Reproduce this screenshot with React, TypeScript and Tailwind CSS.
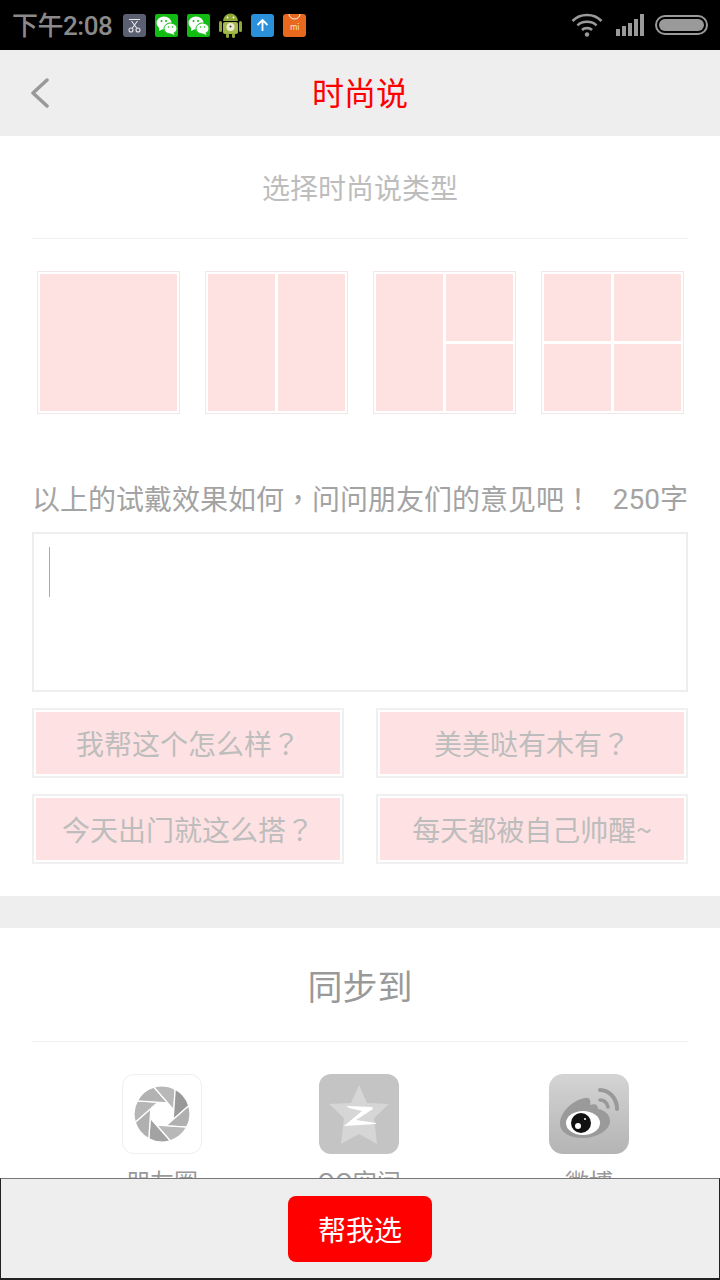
import React from "react";

function Wechat() {
  return (
    <div className="flex h-[23px] w-[23px] items-center justify-center rounded-[2px] bg-[#12bb12]">
      <svg width="23" height="23" viewBox="0 0 23 23">
        <ellipse cx="9" cy="9" rx="7.500" ry="6.500" fill="#fff" />
        <path d="M4.500 13 L4 17 L9 14.500 Z" fill="#fff" />
        <ellipse cx="15.500" cy="14.500" rx="6.500" ry="5.500" fill="#fff" stroke="#12bb12" strokeWidth="1" />
        <path d="M18.500 18.500 L19.500 21 L15.500 19.500 Z" fill="#fff" />
        <circle cx="6.500" cy="7" r="1" fill="#12bb12" />
        <circle cx="11" cy="7" r="1" fill="#12bb12" />
        <circle cx="13.500" cy="13" r="0.800" fill="#12bb12" />
        <circle cx="17.500" cy="13" r="0.800" fill="#12bb12" />
      </svg>
    </div>
  );
}

function StatusBar() {
  return (
    <div className="flex h-[50px] items-center bg-black pl-[12px] pr-[12px]">
      <span className="text-[26px] font-medium leading-none tracking-[-0.5px] text-[#8a8a8a]">
        下午<span className="font-['Roboto',sans-serif]">2:08</span>
      </span>
      <div className="ml-[11px] flex items-center gap-[9px]">
        <div className="flex h-[23px] w-[23px] items-center justify-center rounded-[3px] bg-[#5a5f72]">
          <svg width="15" height="15" viewBox="0 0 15 15" fill="none" stroke="#e8e8e8" strokeWidth="1.100">
            <circle cx="4" cy="12" r="2" />
            <circle cx="11" cy="12" r="2" />
            <path d="M5 10.500 L10.500 3 M10 10.500 L4.500 3 M2 1.500 H13" />
          </svg>
        </div>
        <Wechat />
        <Wechat />
        <svg width="23" height="26" viewBox="0 0 23 26">
          <rect x="0" y="9" width="3" height="11" rx="1.500" fill="#8fa83a" />
          <rect x="20" y="9" width="3" height="11" rx="1.500" fill="#8fa83a" />
          <path d="M4 9 A7.500 7.500 0 0 1 19 9 Z" fill="#8fa83a" />
          <rect x="4" y="10" width="15" height="12" rx="2" fill="#a3b94a" />
          <rect x="7" y="21" width="3" height="5" rx="1.500" fill="#8fa83a" />
          <rect x="13" y="21" width="3" height="5" rx="1.500" fill="#8fa83a" />
          <circle cx="11.500" cy="15" r="4" fill="#f0ead8" />
          <circle cx="8.500" cy="5.500" r="0.900" fill="#fff" />
          <circle cx="14.500" cy="5.500" r="0.900" fill="#fff" />
          <circle cx="11.500" cy="14.500" r="1" fill="#443" />
        </svg>
        <div className="flex h-[23px] w-[23px] items-center justify-center rounded-[3px] bg-[#2a90dc]">
          <svg width="13" height="14" viewBox="0 0 13 14" fill="none" stroke="#fff" strokeWidth="1.800">
            <path d="M6.500 13 V2 M1.500 7 L6.500 2 L11.500 7" />
          </svg>
        </div>
        <div className="relative flex h-[23px] w-[23px] items-center justify-center overflow-hidden rounded-[3px] bg-[#e8681e]">
          <svg className="absolute left-0 top-0" width="23" height="23" viewBox="0 0 23 23" fill="none" stroke="#fff">
            <path d="M6 0 A5.500 5 0 0 0 17 0" strokeWidth="1" />
          </svg>
          <span className="mt-[3px] text-[8px] leading-none text-[#f8e0d0]">mi</span>
        </div>
      </div>
      <div className="ml-auto flex items-center">
        <svg width="32" height="26" viewBox="0 0 32 26" fill="none" stroke="#9a9a9a" strokeWidth="2.600">
          <path d="M1.500 9 C 9 1, 23 1, 30.500 9" />
          <path d="M6.500 13.500 C 11 8.500, 21 8.500, 25.500 13.500" />
          <path d="M11 18 C 13.500 15.500, 18.500 15.500, 21 18" />
          <circle cx="16" cy="22.500" r="2.200" fill="#9a9a9a" stroke="none" />
        </svg>
        <div className="ml-[13px] flex h-[22px] items-end gap-[2px]">
          <div className="h-[7px] w-[4px] bg-[#9a9a9a]" />
          <div className="h-[10px] w-[4px] bg-[#9a9a9a]" />
          <div className="h-[13px] w-[4px] bg-[#9a9a9a]" />
          <div className="h-[17px] w-[4px] bg-[#9a9a9a]" />
          <div className="h-[22px] w-[4px] bg-[#9a9a9a]" />
        </div>
        <div className="ml-[11px] flex h-[20px] w-[53px] items-center rounded-[10px] border-[2px] border-[#9a9a9a] p-[2px]">
          <div className="h-full w-full rounded-[6px] bg-[#9a9a9a]" />
        </div>
      </div>
    </div>
  );
}

function Tile({ variant }: { variant: number }) {
  const cell = "bg-[#fee2e2]";
  return (
    <div className="h-[143px] w-[143px] border border-[#f3e6e6] p-[2px]">
      {variant === 1 && <div className={`h-full w-full ${cell}`} />}
      {variant === 2 && (
        <div className="grid h-full grid-cols-2 gap-[3px]">
          <div className={cell} />
          <div className={cell} />
        </div>
      )}
      {variant === 3 && (
        <div className="grid h-full grid-cols-2 grid-rows-2 gap-[3px]">
          <div className={`row-span-2 ${cell}`} />
          <div className={cell} />
          <div className={cell} />
        </div>
      )}
      {variant === 4 && (
        <div className="grid h-full grid-cols-2 grid-rows-2 gap-[3px]">
          <div className={cell} />
          <div className={cell} />
          <div className={cell} />
          <div className={cell} />
        </div>
      )}
    </div>
  );
}

function Punct({ children }: { children: string }) {
  return <span className="font-['Noto_Sans_CJK_TC',sans-serif]">{children}</span>;
}

function Suggest({ children }: { children: React.ReactNode }) {
  return (
    <div className="h-[70px] border-[2px] border-[#f0f0f0] p-[2px]">
      <div className="flex h-full items-center justify-center bg-[#fee2e3] text-[28px] leading-none text-[#bdbdbd]">
        <span>{children}</span>
      </div>
    </div>
  );
}

const BLADE_SHADES = ["#b8b8b8", "#999999", "#b0b0b0", "#b8b8b8", "#a2a2a2", "#b0b0b0", "#b6b6b6", "#b2b2b2"];

function Aperture() {
  const R = 28;
  const r = 11.5;
  const twist = (Math.acos(r / R) * 180) / Math.PI;
  const pt = (deg: number, rad: number) => {
    const a = ((deg - 90) * Math.PI) / 180;
    return `${(rad * Math.cos(a)).toFixed(2)} ${(rad * Math.sin(a)).toFixed(2)}`;
  };
  return (
    <svg width="58" height="58" viewBox="-29 -29 58 58">
      {BLADE_SHADES.map((fill, i) => {
        const a = -17 + i * 45;
        const v = a + twist + 22.5;
        const d = `M${pt(a, R)} A${R} ${R} 0 0 1 ${pt(a + 45, R)} L${pt(v, r / Math.cos(Math.PI / 8))} Z`;
        return <path key={i} d={d} fill={fill} stroke="#fff" strokeWidth="1.300" strokeLinejoin="round" />;
      })}
    </svg>
  );
}

function Share({ label, children, className }: { label: string; children: React.ReactNode; className: string }) {
  return (
    <div className={`flex flex-col items-center ${className}`}>
      {children}
      <span className="mt-[11px] whitespace-nowrap text-[24px] leading-[32px] text-[#999]">{label}</span>
    </div>
  );
}

export default function App() {
  return (
    <div className="relative h-[1280px] w-[720px] overflow-hidden bg-white font-['Noto_Sans_CJK_SC',sans-serif]">
      <StatusBar />
      <div className="relative flex h-[86px] items-center justify-center bg-[#eeeeee]">
        <svg className="absolute left-[30px] top-[28px]" width="20" height="30" viewBox="0 0 20 30" fill="none" stroke="#999" strokeWidth="3.500" strokeLinecap="round" strokeLinejoin="round">
          <path d="M17 2 L3 15 L17 28" />
        </svg>
        <span className="mb-[4px] text-[32px] leading-none text-[#ff0000]">时尚说</span>
      </div>

      <div className="px-[32px]">
        <div className="flex h-[103px] items-center justify-center border-b border-[#f0f0f0] text-[28px] text-[#bdbdbd]">选择时尚说类型</div>
        <div className="mt-[32px] flex justify-between px-[5px] pr-[4px]">
          <Tile variant={1} />
          <Tile variant={2} />
          <Tile variant={3} />
          <Tile variant={4} />
        </div>
        <div className="mt-[62px] flex h-[44px] items-center justify-between text-[28px] leading-none text-[#a3a3a3]">
          <span>
            以上的试戴效果如何<Punct>，</Punct>问问朋友们的意见吧<Punct>！</Punct>
          </span>
          <span>
            <span className="font-['Roboto',sans-serif]">250</span>字
          </span>
        </div>
        <div className="mt-[12px] h-[160px] border-[2px] border-[#eeeeee] pl-[15px] pt-[13px]">
          <div className="h-[50px] w-px bg-[#aaa]" />
        </div>
        <div className="mt-[16px] grid grid-cols-2 gap-x-[32px] gap-y-[16px]">
          <Suggest>
            我帮这个怎么样<Punct>？</Punct>
          </Suggest>
          <Suggest>
            美美哒有木有<Punct>？</Punct>
          </Suggest>
          <Suggest>
            今天出门就这么搭<Punct>？</Punct>
          </Suggest>
          <Suggest>每天都被自己帅醒~</Suggest>
        </div>
      </div>

      <div className="mt-[32px] h-[32px] bg-[#eeeeee]" />

      <div className="px-[32px]">
        <div className="flex h-[114px] items-center justify-center border-b border-[#f0f0f0] text-[35px] leading-none text-[#999]">同步到</div>
      </div>
      <div className="mt-[32px] flex pl-[122px]">
        <Share label="朋友圈" className="w-[80px]">
          <div className="flex h-[80px] w-[80px] items-center justify-center rounded-[12px] border border-[#eeeeee] bg-white">
            <Aperture />
          </div>
        </Share>
        <Share label="QQ空间" className="ml-[117px] w-[80px]">
          <div className="flex h-[80px] w-[80px] items-center justify-center rounded-[12px] bg-[#c4c4c4]">
            <svg width="60" height="59" viewBox="0 0 60 59">
              <path d="M30 0 L38 18 L60 19 L45 33 L48 59 L30 49 L12 59 L15 33 L0 19 L22 18 Z" fill="#d6d6d6" />
              <path d="M17 21 L43 22 L44 24 L27 35 L47 38 L47 39 L15 41 L33 26 L20 23 Z" fill="#fff" />
            </svg>
          </div>
        </Share>
        <Share label="微博" className="ml-[150px] w-[80px]">
          <div className="h-[80px] w-[80px] rounded-[14px] bg-gradient-to-b from-[#d4d4d4] to-[#b4b4b4]">
            <svg width="80" height="80" viewBox="0 0 80 80">
              <path d="M11 50 C11 38 24 26 36 24 C41 23 42 27 41 31 C46 29 49 31 49 35 C56 36 61 41 61 47 C61 56 48 64 34 64 C20 64 11 58 11 50 Z" fill="#9a9a9a" />
              <ellipse cx="34" cy="49" rx="17" ry="12" fill="#fff" />
              <circle cx="32" cy="49" r="10" fill="#111" />
              <circle cx="29" cy="52" r="3" fill="#fff" />
              <circle cx="36" cy="45" r="1" fill="#fff" />
              <path d="M51 16 C60 16 68 24 68 35" fill="none" stroke="#999" strokeWidth="4" strokeLinecap="round" />
              <path d="M51 26 C55 26 58 29 59 33" fill="none" stroke="#999" strokeWidth="3.500" strokeLinecap="round" />
            </svg>
          </div>
        </Share>
      </div>

      <div className="absolute bottom-0 left-0 flex h-[102px] w-[720px] items-center justify-center border border-b-[2px] border-[#222] border-t-[#777] bg-[#eeeeee] pt-[1px]">
        <div className="flex h-[66px] w-[144px] items-center justify-center rounded-[8px] bg-[#ff0000] text-[28px] leading-none text-white">帮我选</div>
      </div>
    </div>
  );
}
